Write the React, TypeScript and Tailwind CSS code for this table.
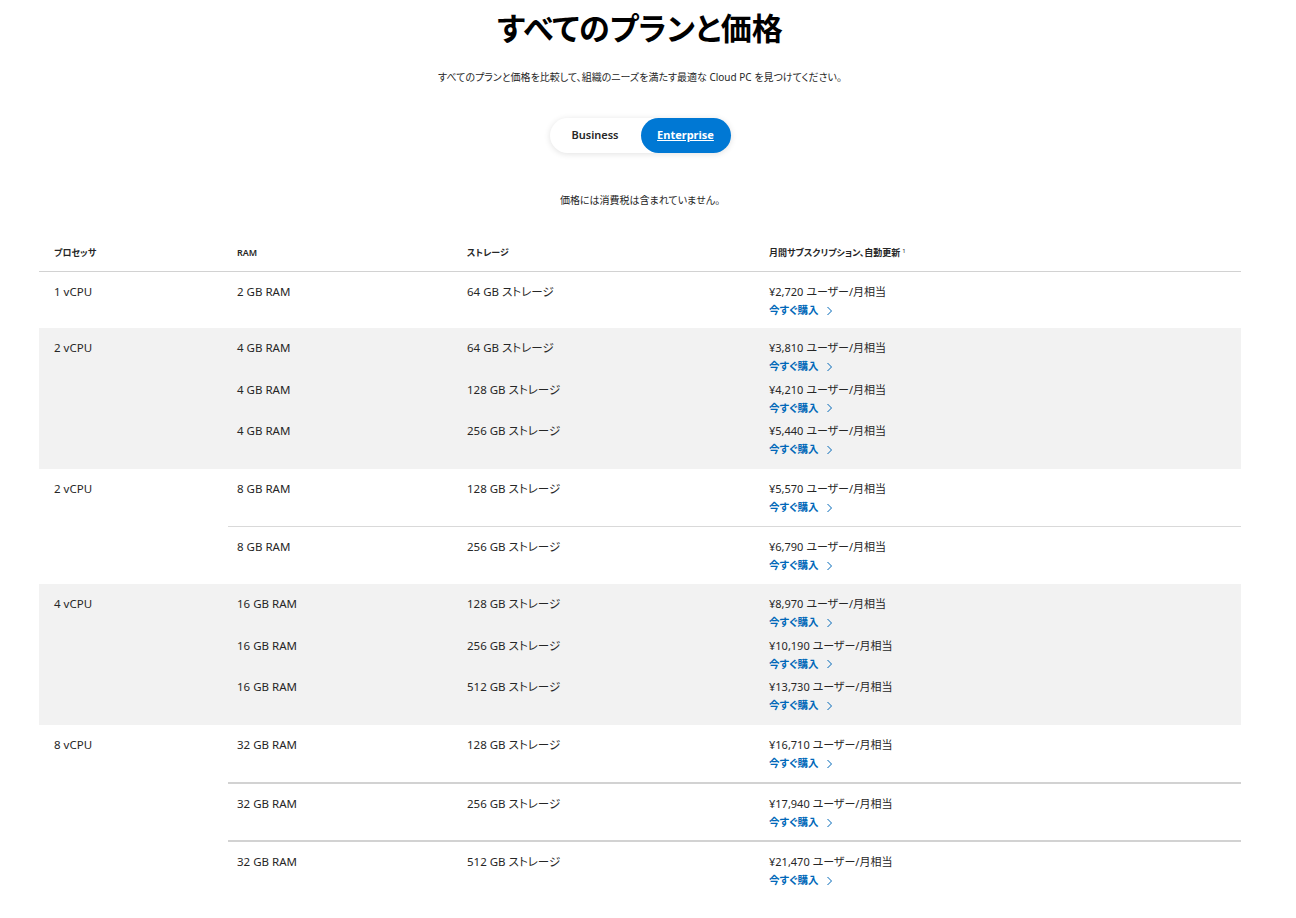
import React from "react";

type Sub = { ram: string; storage: string; price: string };
type Group = { cpu: string; gray: boolean; rows: Sub[]; line?: string };

const groups: Group[] = [
  { cpu: "1 vCPU", gray: false, rows: [{ ram: "2 GB RAM", storage: "64 GB ストレージ", price: "¥2,720" }] },
  {
    cpu: "2 vCPU",
    gray: true,
    rows: [
      { ram: "4 GB RAM", storage: "64 GB ストレージ", price: "¥3,810" },
      { ram: "4 GB RAM", storage: "128 GB ストレージ", price: "¥4,210" },
      { ram: "4 GB RAM", storage: "256 GB ストレージ", price: "¥5,440" },
    ],
  },
  {
    cpu: "2 vCPU",
    gray: false,
    line: "border-t border-[#d9d9d9] pb-[10px]",
    rows: [
      { ram: "8 GB RAM", storage: "128 GB ストレージ", price: "¥5,570" },
      { ram: "8 GB RAM", storage: "256 GB ストレージ", price: "¥6,790" },
    ],
  },
  {
    cpu: "4 vCPU",
    gray: true,
    rows: [
      { ram: "16 GB RAM", storage: "128 GB ストレージ", price: "¥8,970" },
      { ram: "16 GB RAM", storage: "256 GB ストレージ", price: "¥10,190" },
      { ram: "16 GB RAM", storage: "512 GB ストレージ", price: "¥13,730" },
    ],
  },
  {
    cpu: "8 vCPU",
    gray: false,
    line: "border-t-2 border-[#d2d2d2] pb-[9px]",
    rows: [
      { ram: "32 GB RAM", storage: "128 GB ストレージ", price: "¥16,710" },
      { ram: "32 GB RAM", storage: "256 GB ストレージ", price: "¥17,940" },
      { ram: "32 GB RAM", storage: "512 GB ストレージ", price: "¥21,470" },
    ],
  },
];

const Chevron = () => (
  <svg width="7" height="10" viewBox="0 0 7 10" className="ml-[8px] mt-[1px]">
    <path d="M1.5 1 L5.5 5 L1.5 9" fill="none" stroke="#0067b8" strokeWidth="1" />
  </svg>
);

const SubRow = ({ r, cls }: { r: Sub; cls: string }) => (
  <div className={`grid grid-cols-[230px_302px_1fr] text-[11.5px] leading-[18px] text-[#262626] ${cls}`}>
    <div className="pl-[9px]">{r.ram}</div>
    <div className="pl-[9px]">{r.storage}</div>
    <div className="pl-[9px]">
      <div className="text-[11px]">{r.price} ユーザー/月相当</div>
      <a href="#" className="flex items-center text-[10.5px] text-[#0067b8] font-semibold">
        今すぐ購入
        <Chevron />
      </a>
    </div>
  </div>
);

const GroupBlock = ({ g }: { g: Group }) => (
  <div className={`flex ${g.gray ? "bg-[#f2f2f2] py-[11px]" : ""}`}>
    <div className={`w-[189px] shrink-0 pl-[15px] text-[11.5px] leading-[18px] text-[#262626] ${g.gray ? "" : "pt-[11px]"}`}>
      {g.cpu}
    </div>
    <div className={`flex-1 flex flex-col ${g.gray ? "gap-[5.5px]" : ""}`}>
      {g.rows.map((r, i) => (
        <SubRow
          key={i}
          r={r}
          cls={g.gray ? "" : `pt-[11px] ${i > 0 ? g.line : i === g.rows.length - 1 ? "pb-[9px]" : "pb-[10px]"}`}
        />
      ))}
    </div>
  </div>
);

export default function App() {
  return (
    <div className="w-[1280px] bg-white text-[#1a1a1a] font-['Noto_Sans','Noto_Sans_CJK_JP',sans-serif] [font-feature-settings:'palt']">
      <h1 className="pt-[6px] text-center text-[31px] leading-[44px] font-semibold text-black">
        すべてのプランと価格
      </h1>
      <p className="mt-[19px] text-center text-[10px] leading-[16px] text-[#262626]">
        すべてのプランと価格を比較して、組織のニーズを満たす最適な Cloud PC を見つけてください。
      </p>
      <div className="mt-[33px] flex justify-center">
        <div className="flex items-center h-[35px] w-[181px] rounded-full bg-white shadow-[0_1px_6px_rgba(0,0,0,0.12)]">
          <button className="w-[91px] h-full text-[11px] font-semibold text-[#262626]">Business</button>
          <button className="w-[90px] h-full rounded-full bg-[#0078d4] text-[11px] font-bold text-white underline">
            Enterprise
          </button>
        </div>
      </div>
      <p className="mt-[39px] text-center text-[10px] leading-[16px] text-[#262626]">
        価格には消費税は含まれていません。
      </p>
      <div className="mx-[39px] mt-[26px] pb-[20px]">
        <div className="grid grid-cols-[189px_230px_302px_1fr] h-[38px] items-center border-b border-[#d2d2d2] text-[9px] font-semibold text-[#262626]">
          <div className="pl-[15px]">プロセッサ</div>
          <div className="pl-[9px]">RAM</div>
          <div className="pl-[9px]">ストレージ</div>
          <div className="pl-[9px]">
            月間サブスクリプション、自動更新<sup className="ml-[2px] text-[6px] font-normal">1</sup>
          </div>
        </div>
        {groups.map((g, i) => (
          <GroupBlock key={i} g={g} />
        ))}
      </div>
    </div>
  );
}
